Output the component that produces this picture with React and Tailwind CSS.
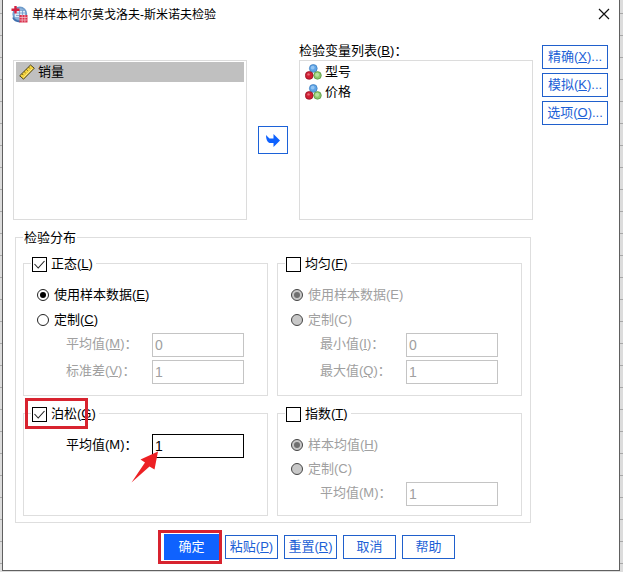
import React, { useId } from "react";

function AppIcon() {
  return (
    <svg viewBox="0 0 17 17" className="h-[17px] w-[17px] shrink-0" aria-hidden="true">
      <circle cx="8.8" cy="8" r="7.400" fill="#6f9bca" />
      <circle cx="8.6" cy="8" r="6" fill="#8fb5dc" />
      <path d="M6 4h8v7H4V7z" fill="#dceaf6" />
      <path d="M7 4.500h7M6 7h8M5 9.500h8M8.500 4v7M11.500 4v7" stroke="#6f9bca" strokeWidth="0.800" fill="none" />
      <path d="M2 11.500c1.200 3 4 4 7 4" stroke="#3f6fae" strokeWidth="1.800" fill="none" />
      <path d="M4.500 0v7.500M0.500 3.800h8" stroke="#d3203f" strokeWidth="2.400" fill="none" />
      <rect x="8.500" y="9" width="8" height="7.500" fill="#d9304c" />
      <path d="M8.500 11.500h8M8.500 14h8M11.200 9v7.500M13.900 9v7.500" stroke="#f6c9d0" strokeWidth="0.700" />
    </svg>
  );
}

function RulerIcon() {
  return (
    <svg viewBox="0 0 16 16" className="h-4 w-4 shrink-0" aria-hidden="true">
      <path d="M0.700 11.800L11.500 1L15.300 4.200L4.500 15.200z" fill="#f5d440" stroke="#3d3512" strokeWidth="0.900" strokeLinejoin="round" />
      <path d="M3 9.800l1.300 1.300M5.200 7.600l1.300 1.300M7.400 5.400l1.300 1.300M9.600 3.200l1.300 1.300" stroke="#5c4e14" strokeWidth="0.900" />
      <path d="M4.600 13.400L13.400 4.600" stroke="#fbeb9a" strokeWidth="0.900" />
    </svg>
  );
}

function NominalIcon() {
  return (
    <svg viewBox="0 0 17 16" className="h-4 w-[17px] shrink-0" aria-hidden="true">
      <circle cx="8.300" cy="4.400" r="3.900" fill="#5fa5e6" stroke="#3a7abc" strokeWidth="0.700" />
      <circle cx="7.700" cy="3.600" r="1.900" fill="#93c5f3" />
      <circle cx="12.500" cy="11.400" r="3.800" fill="#8cc96b" stroke="#558f40" strokeWidth="0.700" />
      <circle cx="12.100" cy="10.700" r="2" fill="#b7e09f" />
      <circle cx="4.200" cy="11.400" r="3.900" fill="#cf1f33" stroke="#8c1020" strokeWidth="0.700" />
      <circle cx="3.500" cy="10.400" r="1.200" fill="#ea6b78" />
    </svg>
  );
}

function Mnemonic({ text, keyChar, plain, suffix = "" }) {
  return (
    <span className="whitespace-nowrap">
      {text}
      {keyChar && <>({plain ? keyChar : <u>{keyChar}</u>})</>}
      {suffix}
    </span>
  );
}

function ListItem({ icon, children, selected = false }) {
  return (
    <li
      role="option"
      aria-selected={selected}
      className={"flex h-5 items-center gap-[3px] pl-[3px] " + (selected ? "bg-[#c0c0c0]" : "")}
    >
      {icon}
      <span>{children}</span>
    </li>
  );
}

function Button({ children, className = "" }) {
  return (
    <button
      type="button"
      className={"flex h-6 items-center justify-center border border-[#2060cc] bg-white text-[#1c5fd6] " + className}
    >
      {children}
    </button>
  );
}

function CheckLegend({ text, keyChar, checked = false }) {
  const id = useId();
  return (
    <legend className="ml-[7px] h-5 px-px pt-[3px]">
      <span className="flex h-4 items-center gap-1">
        <span className="grid">
          <input
            id={id}
            type="checkbox"
            defaultChecked={checked}
            className="peer col-start-1 row-start-1 h-[15px] w-[15px] appearance-none border border-black bg-white"
          />
          <svg
            viewBox="0 0 15 15"
            aria-hidden="true"
            className="pointer-events-none invisible col-start-1 row-start-1 h-[15px] w-[15px] peer-checked:visible"
          >
            <path d="M2.500 7l3.700 4L12.500 4" fill="none" stroke="#222" strokeWidth="1.100" />
          </svg>
        </span>
        <label htmlFor={id} className="pr-0.5">
          <Mnemonic text={text} keyChar={keyChar} />
        </label>
      </span>
    </legend>
  );
}

function Radio({ name, checked, disabled, rowClass, ...label }) {
  return (
    <label className={"flex items-center gap-[5px] pl-[13px] " + rowClass + (disabled ? " text-[#a0a0a0]" : "")}>
      <input
        type="radio"
        name={name}
        defaultChecked={checked}
        disabled={disabled}
        className="grid h-3 w-3 shrink-0 appearance-none place-items-center rounded-full border border-[#222] bg-white before:hidden before:h-1.5 before:w-1.5 before:rounded-full before:bg-black checked:before:block disabled:border-[#444] disabled:bg-[#c8c8c8] disabled:before:bg-[#707070]"
      />
      <Mnemonic {...label} />
    </label>
  );
}

function Field({ value, disabled, ...label }) {
  const id = useId();
  return (
    <div className={"flex h-6 items-center pl-[42px] " + (disabled ? "text-[#a0a0a0]" : "text-black")}>
      <label htmlFor={id} className="w-[86px] shrink-0 pb-0.5">
        <Mnemonic {...label} suffix="：" />
      </label>
      <input
        id={id}
        type="text"
        defaultValue={value}
        disabled={disabled}
        className="h-6 w-[92px] border border-black bg-white px-0.5 text-sm disabled:border-[#c4c4c4]"
      />
    </div>
  );
}

const groupBox = "min-w-0 border border-[#dedede]";

export default function App() {
  return (
    <div className="flex min-h-screen bg-[#dcdcdc] bg-[linear-gradient(to_bottom,transparent_21px,#a8a8a8_21px)] bg-[length:100%_22px] bg-[position:0_14px] pr-[3px] pb-px pl-[2px] font-['Liberation_Sans','Noto_Sans_CJK_SC',sans-serif] text-[13px] leading-4 text-black">
      <main className="flex grow flex-col border-x border-b border-[#606060] bg-white">
        <header className="flex h-7 items-center gap-1 pr-2 pl-2 text-xs">
          <AppIcon />
          <h1 className="grow pt-0.5">单样本柯尔莫戈洛夫-斯米诺夫检验</h1>
          <button type="button" aria-label="关闭" className="p-px">
            <svg viewBox="0 0 12 12" className="h-3 w-3" aria-hidden="true">
              <path d="M1 1l10 10M11 1L1 11" stroke="#111" strokeWidth="1.200" />
            </svg>
          </button>
        </header>

        <div className="flex gap-[9px] pt-3.5 pr-[11px] pl-2.5">
          <div className="flex grow flex-col gap-2">
            <div className="grid grid-cols-[1fr_auto_1fr] gap-x-[11px]">
              <ul role="listbox" aria-label="变量" className="mt-[18px] h-40 border border-[#dcdcdc] px-0.5 pt-px">
                <ListItem icon={<RulerIcon />} selected>销量</ListItem>
              </ul>
              <button
                type="button"
                aria-label="移动变量"
                className="mt-[84px] flex h-7 w-[30px] items-center justify-center border border-[#1c62d8] bg-white"
              >
                <svg viewBox="0 0 14 13" className="h-[13px] w-3.5" aria-hidden="true">
                  <path d="M0 1l3.500 3.500h4V0L14 6.500L7.500 13V9H3.500C1.200 8 0 5.500 0 1z" fill="#0f62fe" />
                </svg>
              </button>
              <div>
                <div id="test-list" className="h-[18px] pt-px">
                  <Mnemonic text="检验变量列表" keyChar="B" suffix="：" />
                </div>
                <ul role="listbox" aria-labelledby="test-list" className="h-40 border border-[#dcdcdc] px-0.5 pt-px">
                  <ListItem icon={<NominalIcon />}>型号</ListItem>
                  <ListItem icon={<NominalIcon />}>价格</ListItem>
                </ul>
              </div>
            </div>

            <fieldset className={groupBox + " mx-[2px] pr-2 pl-[7px] pb-1.5"}>
              <legend className="h-[18px] px-px pt-0.5">检验分布</legend>
              <div className="grid grid-cols-2 gap-x-[9px] gap-y-[7px] pt-[7px]">
                <fieldset className={groupBox}>
                  <CheckLegend text="正态" keyChar="L" checked />
                  <div className="flex flex-col pt-[9px] pb-[11px]">
                    <Radio name="normal" rowClass="h-[25px]" text="使用样本数据" keyChar="E" checked />
                    <Radio name="normal" rowClass="h-[25px]" text="定制" keyChar="C" />
                    <div className="flex flex-col gap-[3px] pt-px">
                      <Field text="平均值" keyChar="M" value="0" disabled />
                      <Field text="标准差" keyChar="V" value="1" disabled />
                    </div>
                  </div>
                </fieldset>

                <fieldset className={groupBox}>
                  <CheckLegend text="均匀" keyChar="F" />
                  <div className="flex flex-col pt-[9px] pb-[11px]">
                    <Radio name="uniform" rowClass="h-[25px]" text="使用样本数据" keyChar="E" plain checked disabled />
                    <Radio name="uniform" rowClass="h-[25px]" text="定制" keyChar="C" plain disabled />
                    <div className="flex flex-col gap-[3px] pt-px">
                      <Field text="最小值" keyChar="I" value="0" disabled />
                      <Field text="最大值" keyChar="Q" value="1" disabled />
                    </div>
                  </div>
                </fieldset>

                <div className="relative flex">
                  <fieldset className={groupBox + " grow"}>
                    <CheckLegend text="泊松" keyChar="G" checked />
                    <div className="pt-[11px]">
                      <Field text="平均值" keyChar="M" plain value="1" />
                    </div>
                  </fieldset>
                  <div className="pointer-events-none absolute -top-[5px] left-[2px] h-[31px] w-[63px] border-[3px] border-[#d8232f]" />
                  <svg
                    viewBox="0 0 28 33"
                    aria-hidden="true"
                    className="pointer-events-none absolute top-[48px] left-[108px] h-[33px] w-7"
                  >
                    <path d="M27 0.500L9.500 8.500L14 11.500L0.500 31.500L18.500 15.500L23.500 18.500z" fill="#ed2024" />
                  </svg>
                </div>

                <fieldset className={groupBox}>
                  <CheckLegend text="指数" keyChar="T" />
                  <div className="flex flex-col pt-2.5 pb-[9px]">
                    <Radio name="exponential" rowClass="h-6" text="样本均值" keyChar="H" checked disabled />
                    <Radio name="exponential" rowClass="h-6" text="定制" keyChar="C" plain disabled />
                    <div className="pt-px">
                      <Field text="平均值" keyChar="M" plain value="1" disabled />
                    </div>
                  </div>
                </fieldset>
              </div>
            </fieldset>
          </div>

          <div className="flex w-[66px] shrink-0 flex-col gap-1 pt-[3px]">
            <Button><Mnemonic text="精确" keyChar="X" suffix="..." /></Button>
            <Button><Mnemonic text="模拟" keyChar="K" suffix="..." /></Button>
            <Button><Mnemonic text="选项" keyChar="O" suffix="..." /></Button>
          </div>
        </div>

        <footer className="flex items-center justify-center gap-1.5 pt-[11px] pr-[3px] pb-2.5">
          <div className="relative">
            <button type="button" className="h-[26px] w-[55px] bg-[#0f62fe] text-white">确定</button>
            <div className="pointer-events-none absolute -top-1 -left-1.5 h-[34px] w-16 border-[3px] border-[#d8232f]" />
          </div>
          <Button className="w-[53px]"><Mnemonic text="粘贴" keyChar="P" /></Button>
          <Button className="w-[53px]"><Mnemonic text="重置" keyChar="R" /></Button>
          <Button className="w-[53px]">取消</Button>
          <Button className="w-[53px]">帮助</Button>
        </footer>
      </main>
    </div>
  );
}
